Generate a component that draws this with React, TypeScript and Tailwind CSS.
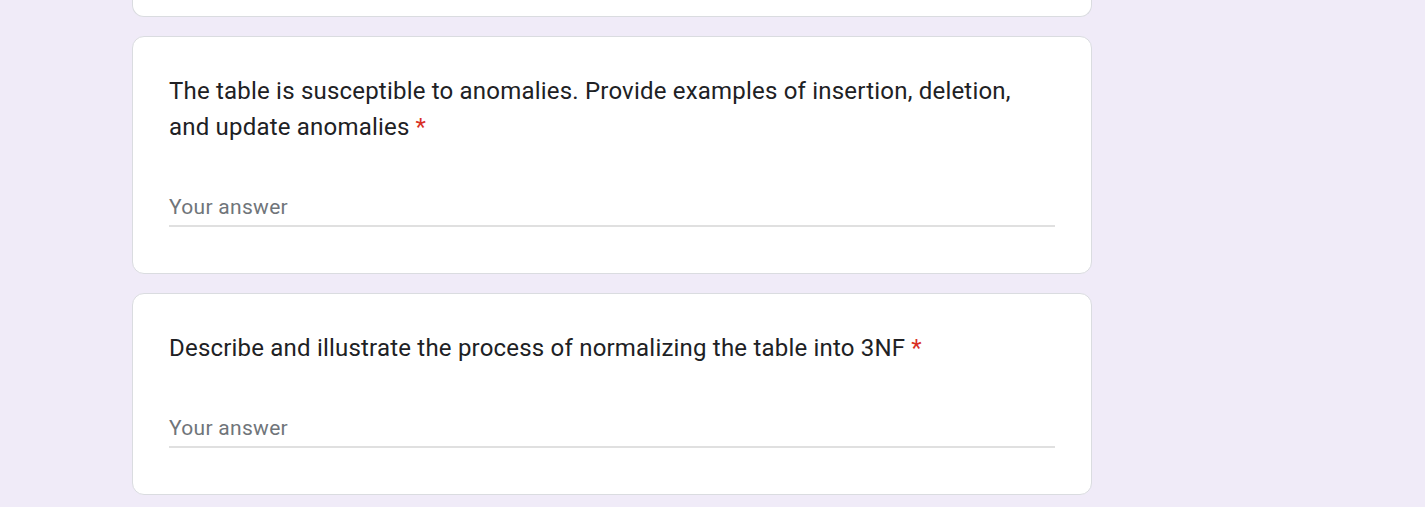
export default function App() {
  return (
    <div className="min-h-screen bg-[#f0ebf8]">
      <div className="ml-[132px] flex w-[960px] flex-col gap-[19px]">
        <div className="h-[17px] rounded-b-[12px] border-x border-b border-[#dadce0] bg-white" />
        <QuestionCard title="The table is susceptible to anomalies. Provide examples of insertion, deletion, and update anomalies" />
        <QuestionCard title="Describe and illustrate the process of normalizing the table into 3NF" />
      </div>
    </div>
  );
}

function QuestionCard({ title }: { title: string }) {
  return (
    <div className="rounded-[12px] border border-[#dadce0] bg-white px-[36px] pt-[36px] pb-[46px]">
      <div className="pr-[40px] font-['Roboto',sans-serif] text-[24px] leading-[36px] tracking-[0.2px] text-[#202124]">
        {title}
        <span className="ml-[6px] text-[#d93025]">*</span>
      </div>
      <div className="mt-[47px] border-b-2 border-[#e0e0e0] pb-[3px] font-['Roboto',sans-serif] text-[21px] leading-[30px] tracking-[0.3px] text-[#70757a]">
        Your answer
      </div>
    </div>
  );
}
